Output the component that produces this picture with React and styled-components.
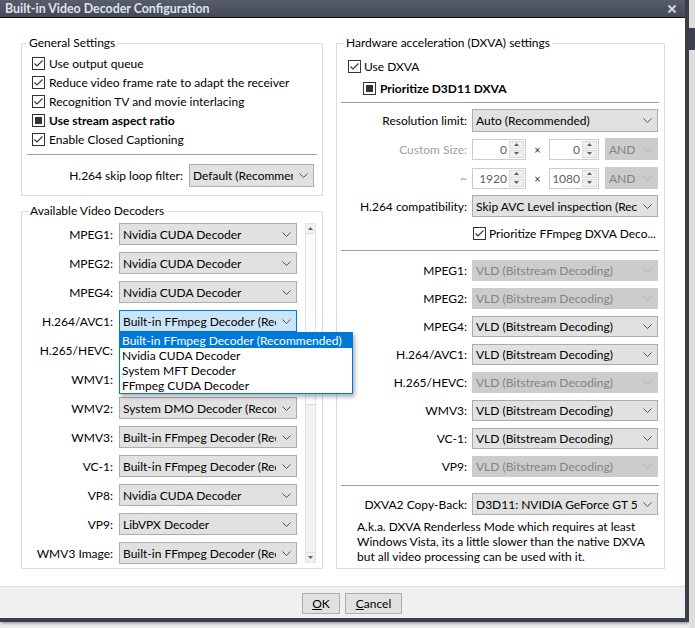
import React from "react";
import styled, { createGlobalStyle } from "styled-components";

const GlobalStyle = createGlobalStyle`
  html, body {
    margin: 0;
    padding: 0;
    background: #e9e9e9;
  }
  body {
    font-family: "Lato", "Liberation Sans", sans-serif;
    font-size: 12px;
    color: #000;
  }
`;

const leftDecoders = [
  { label: "MPEG1:", value: "Nvidia CUDA Decoder" },
  { label: "MPEG2:", value: "Nvidia CUDA Decoder" },
  { label: "MPEG4:", value: "Nvidia CUDA Decoder" },
  { label: "H.264/AVC1:", value: "Built-in FFmpeg Decoder (Recommended)", open: true },
  { label: "H.265/HEVC:", value: "Built-in FFmpeg Decoder (Recommended)" },
  { label: "WMV1:", value: "Built-in FFmpeg Decoder (Recommended)" },
  { label: "WMV2:", value: "System DMO Decoder (Recommended)" },
  { label: "WMV3:", value: "Built-in FFmpeg Decoder (Recommended)" },
  { label: "VC-1:", value: "Built-in FFmpeg Decoder (Recommended)" },
  { label: "VP8:", value: "Nvidia CUDA Decoder" },
  { label: "VP9:", value: "LibVPX Decoder" },
  { label: "WMV3 Image:", value: "Built-in FFmpeg Decoder (Recommended)" },
];

const popupItems = [
  "Built-in FFmpeg Decoder (Recommended)",
  "Nvidia CUDA Decoder",
  "System MFT Decoder",
  "FFmpeg CUDA Decoder",
];

const dxvaCodecs = [
  { label: "MPEG1:", disabled: true },
  { label: "MPEG2:", disabled: true },
  { label: "MPEG4:" },
  { label: "H.264/AVC1:" },
  { label: "H.265/HEVC:", disabled: true },
  { label: "WMV3:" },
  { label: "VC-1:" },
  { label: "VP9:", disabled: true },
];

export default function App() {
  return (
    <>
      <GlobalStyle />
      <Screen>
        <Window>
          <TitleBar>
            <Title>Built-in Video Decoder Configuration</Title>
            <CloseIcon viewBox="0 0 10 10">
              <path d="M1.5 1.5 L8.5 8.5 M8.5 1.5 L1.5 8.5" />
            </CloseIcon>
          </TitleBar>

          <Body>
            <Column>
              <Group>
                <Legend $offset={5}>General Settings</Legend>
                <GroupInner $top={3} $bottom={8}>
                  <CheckList>
                    <CheckRow><CheckBox checked />Use output queue</CheckRow>
                    <CheckRow><CheckBox checked />Reduce video frame rate to adapt the receiver</CheckRow>
                    <CheckRow><CheckBox checked />Recognition TV and movie interlacing</CheckRow>
                    <CheckRow $bold><CheckBox mixed />Use stream aspect ratio</CheckRow>
                    <CheckRow><CheckBox checked />Enable Closed Captioning</CheckRow>
                  </CheckList>
                  <Separator $left={5} $right={5} $top={5} />
                  <SkipRow>
                    <Label>H.264 skip loop filter:</Label>
                    <Select value="Default (Recommended)" width={125} height={23} />
                  </SkipRow>
                </GroupInner>
              </Group>

              <Group>
                <Legend $offset={6}>Available Video Decoders</Legend>
                <GroupInner $top={4} $bottom={4}>
                  <DecoderArea>
                    <DecoderList>
                      {leftDecoders.map((d) => (
                        <DecoderRow key={d.label}>
                          <Label>{d.label}</Label>
                          <Anchor>
                            <Select value={d.value} focused={d.open} />
                            {d.open && (
                              <Popup>
                                {popupItems.map((it, i) => (
                                  <PopupItem key={it} $active={i === 0}>{it}</PopupItem>
                                ))}
                              </Popup>
                            )}
                          </Anchor>
                        </DecoderRow>
                      ))}
                    </DecoderList>
                    <ScrollBar>
                      <ScrollArrow>
                        <Tri viewBox="0 0 5 3"><path d="M0 3 L2.5 0 L5 3 Z" /></Tri>
                      </ScrollArrow>
                      <Thumb />
                      <Track />
                      <ScrollArrow $down>
                        <Tri viewBox="0 0 5 3"><path d="M0 0 L2.5 3 L5 0 Z" /></Tri>
                      </ScrollArrow>
                    </ScrollBar>
                  </DecoderArea>
                </GroupInner>
              </Group>
            </Column>

            <Column $wide>
              <Group $fill>
                <Legend $offset={7}>Hardware acceleration (DXVA) settings</Legend>
                <GroupInner $top={6} $bottom={4}>
                  <CheckRow $h={18} $indent={11} $gap={3}><CheckBox checked />Use DXVA</CheckRow>
                  <CheckRow $h={18} $indent={26} $bold $mt={4}><CheckBox mixed />Prioritize D3D11 DXVA</CheckRow>
                  <Separator $left={4} $right={5} $top={5} />

                  <FormRows>
                    <FormRow $mt={6} $h={23}>
                      <Label>Resolution limit:</Label>
                      <Select value="Auto (Recommended)" height={23} />
                    </FormRow>
                    <FormRow $mt={6}>
                      <Label $muted>Custom Size:</Label>
                      <SizeGroup>
                        <SpinBox value="0" width={54} />
                        <Times>×</Times>
                        <SpinBox value="0" width={50} />
                        <Select value="AND" width={53} disabled />
                      </SizeGroup>
                    </FormRow>
                    <FormRow $mt={7}>
                      <Label $muted>~</Label>
                      <SizeGroup>
                        <SpinBox value="1920" width={54} />
                        <Times>×</Times>
                        <SpinBox value="1080" width={50} />
                        <Select value="AND" width={53} disabled />
                      </SizeGroup>
                    </FormRow>
                    <FormRow $mt={6}>
                      <Label>H.264 compatibility:</Label>
                      <Select value="Skip AVC Level inspection (Recommended)" />
                    </FormRow>
                    <FormRow $h={18} $mt={7}>
                      <span />
                      <CheckRow $h={18} $indent={1} $gap={3}>
                        <CheckBox checked />Prioritize FFmpeg DXVA Deco...
                      </CheckRow>
                    </FormRow>
                  </FormRows>

                  <Separator $left={4} $right={5} $top={8} />

                  <FormRows $top={9} $gap={7}>
                    {dxvaCodecs.map((c) => (
                      <FormRow key={c.label} $h={21}>
                        <Label>{c.label}</Label>
                        <Select value="VLD (Bitstream Decoding)" disabled={c.disabled} height={21} />
                      </FormRow>
                    ))}
                  </FormRows>

                  <Separator $left={4} $right={5} $top={8} />

                  <FormRows $top={7}>
                    <FormRow>
                      <Label>DXVA2 Copy-Back:</Label>
                      <Select value="D3D11: NVIDIA GeForce GT 520" />
                    </FormRow>
                  </FormRows>
                  <Note>
                    A.k.a. DXVA Renderless Mode which requires at least<br />
                    Windows Vista, its a little slower than the native DXVA<br />
                    but all video processing can be used with it.
                  </Note>
                </GroupInner>
              </Group>
            </Column>
          </Body>

          <Footer>
            <Button width={38}><u>O</u>K</Button>
            <Button width={57}><u>C</u>ancel</Button>
          </Footer>
        </Window>
        <Backdrop>
          <BackBand />
        </Backdrop>
      </Screen>
    </>
  );
}

function CheckBox({ checked, mixed }) {
  return (
    <Box>
      {checked && (
        <CheckMark viewBox="0 0 11 11">
          <polyline points="1.5,5.5 4,8 9.5,2.5" />
        </CheckMark>
      )}
      {mixed && <MixedDot />}
    </Box>
  );
}

function Select({ value, width, disabled, focused, height }) {
  return (
    <SelectBox $w={width} $h={height} $disabled={disabled} $focused={focused}>
      <SelectText>{value}</SelectText>
      <Chevron viewBox="0 0 9 5" $disabled={disabled}>
        <polyline points="0.5,0.5 4.5,4.5 8.5,0.5" />
      </Chevron>
    </SelectBox>
  );
}

function SpinBox({ value, width }) {
  return (
    <Spin $w={width}>
      <SpinValue>{value}</SpinValue>
      <SpinButtons>
        <SpinBtn>
          <Tri viewBox="0 0 5 3"><path d="M0 3 L2.5 0 L5 3 Z" /></Tri>
        </SpinBtn>
        <SpinBtn>
          <Tri viewBox="0 0 5 3"><path d="M0 0 L2.5 3 L5 0 Z" /></Tri>
        </SpinBtn>
      </SpinButtons>
    </Spin>
  );
}

const Screen = styled.div`
  width: 695px;
  height: 628px;
  display: flex;
  overflow: hidden;
  background: #ececec;
`;

const Window = styled.div`
  width: 685px;
  height: 618px;
  flex: none;
  display: flex;
  flex-direction: column;
  border-right: 4px solid #3a3e4b;
  border-bottom: 4px solid #3a3e4b;
  box-shadow: 1px 1px 3px rgba(0, 0, 0, 0.45);
`;

const Backdrop = styled.div`
  flex: 1;
  background: #dedede;
  display: flex;
  flex-direction: column;
  padding-top: 28px;
`;

const BackBand = styled.div`
  height: 22px;
  background: #3c404c;
`;

const TitleBar = styled.div`
  height: 17px;
  flex: none;
  border-bottom: 1px solid #15161a;
  background: linear-gradient(#585d6b, #454957);
  display: flex;
  align-items: center;
  justify-content: space-between;
  padding: 0 8px 0 5px;
`;

const Title = styled.div`
  font-weight: bold;
  font-size: 12.4px;
  color: #dfe3ec;
`;

const CloseIcon = styled.svg`
  width: 10px;
  height: 10px;
  path {
    stroke: #d3d6de;
    stroke-width: 2;
    fill: none;
  }
`;

const Body = styled.div`
  flex: 1;
  background: #fff;
  display: flex;
  gap: 13px;
  padding: 17px 0 0 21px;
`;

const Column = styled.div`
  width: ${(p) => (p.$wide ? 329 : 302)}px;
  display: flex;
  flex-direction: column;
  gap: 7px;
`;

const Group = styled.fieldset`
  margin: 0;
  padding: 0;
  min-width: 0;
  border: 1px solid #dcdcdc;
  ${(p) => (p.$fill ? "height: 534px; box-sizing: border-box;" : "")}
`;

const Legend = styled.legend`
  margin-left: ${(p) => p.$offset}px;
  padding: 0 2px;
  line-height: 16px;
  font-size: 12px;
`;

const GroupInner = styled.div`
  padding-top: ${(p) => p.$top}px;
  padding-bottom: ${(p) => p.$bottom}px;
`;

const CheckList = styled.div`
  display: flex;
  flex-direction: column;
  padding-left: 10px;
`;

const CheckRow = styled.div`
  display: flex;
  align-items: center;
  gap: ${(p) => p.$gap ?? 4}px;
  height: ${(p) => p.$h ?? 19}px;
  padding-left: ${(p) => p.$indent ?? 0}px;
  margin-top: ${(p) => p.$mt ?? 0}px;
  font-weight: ${(p) => (p.$bold ? "bold" : "normal")};
  white-space: nowrap;
`;

const Box = styled.span`
  width: 13px;
  height: 13px;
  box-sizing: border-box;
  border: 1px solid #333;
  background: #fff;
  display: inline-flex;
  align-items: center;
  justify-content: center;
  flex: none;
`;

const CheckMark = styled.svg`
  width: 11px;
  height: 11px;
  polyline {
    fill: none;
    stroke: #333;
    stroke-width: 1.1;
  }
`;

const MixedDot = styled.span`
  width: 7px;
  height: 7px;
  background: #333;
`;

const Separator = styled.div`
  height: 1px;
  background: #a0a0a0;
  margin: ${(p) => p.$top}px ${(p) => p.$right}px 0 ${(p) => p.$left}px;
`;

const SkipRow = styled.div`
  display: flex;
  justify-content: flex-end;
  align-items: center;
  gap: 6px;
  margin-top: 9px;
  padding-right: 8px;
`;

const Label = styled.span`
  text-align: right;
  white-space: nowrap;
  color: ${(p) => (p.$muted ? "#a0a0a0" : "#000")};
`;

const DecoderArea = styled.div`
  display: flex;
  align-items: flex-start;
`;

const DecoderList = styled.div`
  display: flex;
  flex-direction: column;
  gap: 7px;
`;

const DecoderRow = styled.div`
  display: grid;
  grid-template-columns: 91px 178px;
  column-gap: 6px;
  align-items: center;
`;

const Anchor = styled.div`
  position: relative;
`;

const SelectBox = styled.div`
  box-sizing: border-box;
  width: ${(p) => (p.$w ? `${p.$w}px` : "100%")};
  height: ${(p) => p.$h ?? 22}px;
  display: flex;
  align-items: center;
  padding-left: 3px;
  border: 1px solid
    ${(p) => (p.$focused ? "#0078d7" : p.$disabled ? "#cccccc" : "#adadad")};
  background: ${(p) => (p.$focused ? "#cce4f7" : p.$disabled ? "#cccccc" : "#e1e1e1")};
  color: ${(p) => (p.$disabled ? "#838383" : "#000")};
`;

const SelectText = styled.span`
  flex: 1;
  min-width: 0;
  overflow: hidden;
  white-space: nowrap;
`;

const Chevron = styled.svg`
  width: 9px;
  height: 5px;
  flex: none;
  margin: 0 5px 0 6px;
  polyline {
    fill: none;
    stroke: ${(p) => (p.$disabled ? "#b3b3b3" : "#555")};
    stroke-width: 1;
  }
`;

const Popup = styled.div`
  position: absolute;
  left: 0;
  top: 100%;
  width: 234px;
  box-sizing: border-box;
  border: 1px solid #0078d7;
  background: #fff;
  box-shadow: 2px 3px 4px rgba(0, 0, 0, 0.3);
  z-index: 5;
`;

const PopupItem = styled.div`
  height: 15px;
  line-height: 15px;
  padding-left: 2px;
  white-space: nowrap;
  background: ${(p) => (p.$active ? "#0078d7" : "transparent")};
  color: ${(p) => (p.$active ? "#fff" : "#000")};
`;

const ScrollBar = styled.div`
  width: 11px;
  height: 340px;
  margin-left: 8px;
  box-sizing: border-box;
  border: 1px solid #e4e4e4;
  background: #f3f3f3;
  display: flex;
  flex-direction: column;
`;

const ScrollArrow = styled.div`
  height: 9px;
  flex: none;
  display: flex;
  align-items: center;
  justify-content: center;
  background: #f0f0f0;
  border-${(p) => (p.$down ? "top" : "bottom")}: 1px solid #e0e0e0;
`;

const Tri = styled.svg`
  width: 5px;
  height: 3px;
  path {
    fill: #606060;
  }
`;

const Thumb = styled.div`
  height: 170px;
  flex: none;
  background: #fbfbfb;
  border-bottom: 1px solid #dadada;
`;

const Track = styled.div`
  flex: 1;
`;

const FormRows = styled.div`
  display: flex;
  flex-direction: column;
  gap: ${(p) => p.$gap ?? 0}px;
  margin-top: ${(p) => p.$top ?? 0}px;
`;

const FormRow = styled.div`
  display: grid;
  grid-template-columns: 130px 186px;
  column-gap: 5px;
  align-items: center;
  height: ${(p) => p.$h ?? 22}px;
  margin-top: ${(p) => p.$mt ?? 0}px;
`;

const SizeGroup = styled.div`
  display: flex;
  align-items: center;
  height: 21px;
`;

const Times = styled.span`
  width: 23px;
  text-align: center;
  font-size: 11px;
  color: #333;
  flex: none;
`;

const Spin = styled.div`
  width: ${(p) => p.$w}px;
  height: 21px;
  box-sizing: border-box;
  border: 1px solid #cccccc;
  background: #fff;
  display: flex;
  margin-right: ${(p) => (p.$w === 50 ? 6 : 0)}px;
`;

const SpinValue = styled.span`
  flex: 1;
  text-align: right;
  padding-right: 2px;
  line-height: 19px;
  color: #5f5f5f;
`;

const SpinButtons = styled.div`
  width: 16px;
  display: flex;
  flex-direction: column;
  gap: 1px;
  padding: 1px 1px 1px 0;
  box-sizing: border-box;
`;

const SpinBtn = styled.div`
  flex: 1;
  display: flex;
  align-items: center;
  justify-content: center;
  background: #f0f0f0;
  border: 1px solid #dadada;
`;

const Note = styled.p`
  margin: 4px 0 0 20px;
  line-height: 15px;
  white-space: nowrap;
`;

const Footer = styled.div`
  height: 31px;
  flex: none;
  border-top: 1px solid #dfdfdf;
  background: #f0f0f0;
  display: flex;
  align-items: center;
  gap: 5px;
  padding-left: 302px;
`;

const Button = styled.div`
  width: ${(p) => p.width}px;
  height: 21px;
  box-sizing: border-box;
  border: 1px solid #adadad;
  background: #e1e1e1;
  display: flex;
  align-items: center;
  justify-content: center;
  margin-top: 1px;
  u {
    text-decoration-thickness: 1px;
  }
`;
